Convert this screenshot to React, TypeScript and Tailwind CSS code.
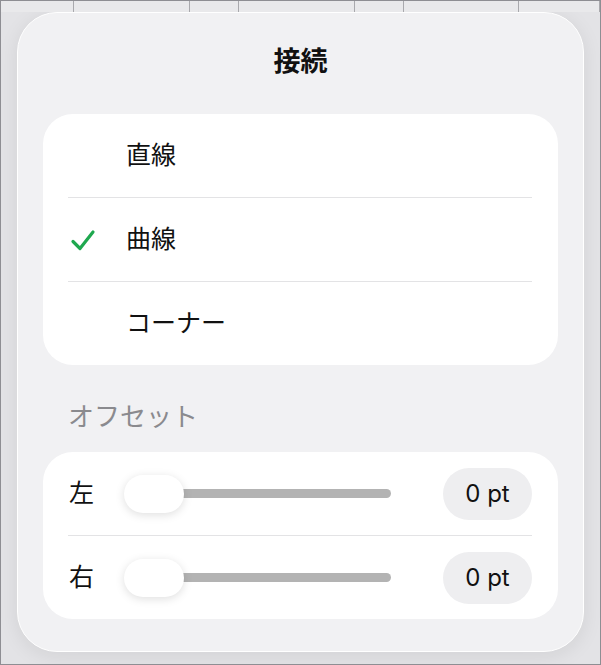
import type { ReactNode } from 'react'

const font = { fontFamily: 'Inter, "Noto Sans CJK JP", sans-serif' }

const topCells = [73, 116, 49, 116, 49, 115, 81]

function Check() {
  return (
    <svg width="26" height="24" viewBox="0 0 26 24" fill="none">
      <path d="M3 13.5 L10 20.5 L23 4" stroke="#1fa84f" strokeWidth="3.2" strokeLinecap="round" strokeLinejoin="round" />
    </svg>
  )
}

function OptionRow({ label, checked, last }: { label: string; checked?: boolean; last?: boolean }) {
  return (
    <div>
      <div className="h-[83px] flex items-center">
        <div className="w-[83px] pl-[27px] flex items-center">{checked && <Check />}</div>
        <span className="text-[25px] text-[#111] leading-none">{label}</span>
      </div>
      {!last && <div className="ml-[25px] mr-[26px] h-px bg-[#e3e3e5]" />}
    </div>
  )
}

function SliderRow({ label, last }: { label: string; last?: boolean }) {
  return (
    <div>
      <div className="h-[83px] flex items-center pl-[26px] pr-[26px]">
        <span className="w-[55px] text-[25px] text-[#111] leading-none">{label}</span>
        <div className="relative w-[267px] h-[38px] flex items-center">
          <div className="ml-[40px] flex-1 h-[9px] rounded-full bg-[#b3b3b3]" />
          <div className="absolute left-0 top-0 w-[60px] h-[38px] rounded-[19px] bg-white shadow-[0_2px_10px_rgba(0,0,0,0.13)]" />
        </div>
        <div className="ml-auto w-[89px] h-[52px] rounded-full bg-[#eeeef0] flex items-center justify-center text-[24px] text-[#111]">
          0 pt
        </div>
      </div>
      {!last && <div className="ml-[25px] mr-[26px] h-px bg-[#e3e3e5]" />}
    </div>
  )
}

function Card({ children }: { children: ReactNode }) {
  return <div className="mx-[25px] rounded-[30px] bg-white overflow-hidden">{children}</div>
}

export default function App() {
  return (
    <div style={font} className="w-[601px] h-[665px] border border-[#8e8e93] bg-[#e3e3e6] overflow-hidden">
      <div className="flex h-[11px]">
        {topCells.map((w, i) => (
          <div key={i} style={{ width: w }} className="h-full border-r border-[#a9a9ad] bg-[#e9e9eb]" />
        ))}
      </div>
      <div className="ml-[16px] w-[567px] h-[640px] rounded-[40px] bg-[#f1f1f3] border border-white shadow-[0_4px_20px_rgba(0,0,0,0.08)]">
        <div className="pt-[33px] h-[101px] text-center text-[27px] font-bold text-[#111] leading-[32px]">接続</div>
        <Card>
          <OptionRow label="直線" />
          <OptionRow label="曲線" checked />
          <OptionRow label="コーナー" last />
        </Card>
        <div className="mt-[37px] h-[50px] pl-[50px] text-[26px] leading-[30px] text-[#8a8a8e]">オフセット</div>
        <Card>
          <SliderRow label="左" />
          <SliderRow label="右" last />
        </Card>
      </div>
    </div>
  )
}
